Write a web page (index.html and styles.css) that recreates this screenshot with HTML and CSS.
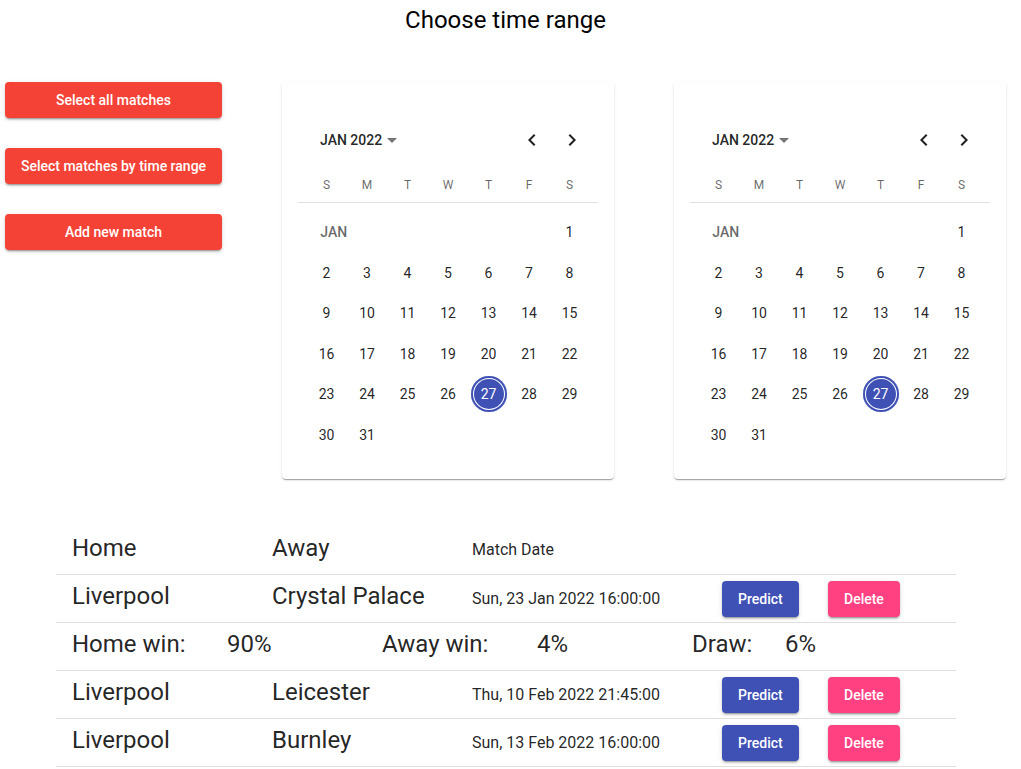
FILE: index.html
```html
<!DOCTYPE html>
<html>
<head>
<meta charset="utf-8">
<link rel="stylesheet" href="styles.css">
</head>
<body>
<div class="page">
  <h1 class="title">Choose time range</h1>
  <div class="top">
    <div class="actions">
      <button class="btn btn-red">Select all matches</button>
      <button class="btn btn-red">Select matches by time range</button>
      <button class="btn btn-red">Add new match</button>
    </div>

    <div class="card">
      <div class="cal-head">
        <div class="month">JAN 2022 <span class="caret"></span></div>
        <div class="navs">
          <svg class="nav" viewBox="0 0 24 24" width="24" height="24"><path d="M15.41 7.41 14 6l-6 6 6 6 1.41-1.41L10.83 12z"/></svg>
          <svg class="nav" viewBox="0 0 24 24" width="24" height="24"><path d="M10 6 8.59 7.41 13.17 12l-4.58 4.59L10 18l6-6z"/></svg>
        </div>
      </div>
      <div class="weekdays"><span>S</span><span>M</span><span>T</span><span>W</span><span>T</span><span>F</span><span>S</span></div>
      <div class="divider"></div>
      <div class="days">
        <span class="mlabel">JAN</span><span>1</span>
        <span>2</span><span>3</span><span>4</span><span>5</span><span>6</span><span>7</span><span>8</span>
        <span>9</span><span>10</span><span>11</span><span>12</span><span>13</span><span>14</span><span>15</span>
        <span>16</span><span>17</span><span>18</span><span>19</span><span>20</span><span>21</span><span>22</span>
        <span>23</span><span>24</span><span>25</span><span>26</span><span><b class="sel">27</b></span><span>28</span><span>29</span>
        <span>30</span><span>31</span>
      </div>
    </div>

    <div class="card">
      <div class="cal-head">
        <div class="month">JAN 2022 <span class="caret"></span></div>
        <div class="navs">
          <svg class="nav" viewBox="0 0 24 24" width="24" height="24"><path d="M15.41 7.41 14 6l-6 6 6 6 1.41-1.41L10.83 12z"/></svg>
          <svg class="nav" viewBox="0 0 24 24" width="24" height="24"><path d="M10 6 8.59 7.41 13.17 12l-4.58 4.59L10 18l6-6z"/></svg>
        </div>
      </div>
      <div class="weekdays"><span>S</span><span>M</span><span>T</span><span>W</span><span>T</span><span>F</span><span>S</span></div>
      <div class="divider"></div>
      <div class="days">
        <span class="mlabel">JAN</span><span>1</span>
        <span>2</span><span>3</span><span>4</span><span>5</span><span>6</span><span>7</span><span>8</span>
        <span>9</span><span>10</span><span>11</span><span>12</span><span>13</span><span>14</span><span>15</span>
        <span>16</span><span>17</span><span>18</span><span>19</span><span>20</span><span>21</span><span>22</span>
        <span>23</span><span>24</span><span>25</span><span>26</span><span><b class="sel">27</b></span><span>28</span><span>29</span>
        <span>30</span><span>31</span>
      </div>
    </div>
  </div>

  <table class="matches">
    <thead>
      <tr>
        <th class="big">Home</th>
        <th class="big">Away</th>
        <th class="small">Match Date</th>
        <th class="act"></th>
        <th class="act"></th>
      </tr>
    </thead>
    <tbody>
      <tr>
        <td class="big">Liverpool</td>
        <td class="big">Crystal Palace</td>
        <td class="small">Sun, 23 Jan 2022 16:00:00</td>
        <td class="act"><button class="btn btn-blue">Predict</button></td>
        <td class="act"><button class="btn btn-pink">Delete</button></td>
      </tr>
      <tr>
        <td colspan="5" class="big pred">
          <span class="lab lab-w">Home win:</span><span class="val">90%</span><span class="lab lab-w">Away win:</span><span class="val">4%</span><span class="lab lab-d">Draw:</span><span class="val">6%</span>
        </td>
      </tr>
      <tr>
        <td class="big">Liverpool</td>
        <td class="big">Leicester</td>
        <td class="small">Thu, 10 Feb 2022 21:45:00</td>
        <td class="act"><button class="btn btn-blue">Predict</button></td>
        <td class="act"><button class="btn btn-pink">Delete</button></td>
      </tr>
      <tr>
        <td class="big">Liverpool</td>
        <td class="big">Burnley</td>
        <td class="small">Sun, 13 Feb 2022 16:00:00</td>
        <td class="act"><button class="btn btn-blue">Predict</button></td>
        <td class="act"><button class="btn btn-pink">Delete</button></td>
      </tr>
    </tbody>
  </table>
</div>
</body>
</html>
```

FILE: styles.css
```css
* { box-sizing: border-box; }
html, body { margin: 0; padding: 0; background: #fff; }
body {
  font-family: Roboto, "Noto Sans", "Liberation Sans", sans-serif;
  color: rgba(0,0,0,0.87);
}
.page { width: 1011px; }
.title {
  margin: 4px 0 0;
  font-size: 24px;
  font-weight: 400;
  line-height: 32px;
  text-align: center;
  color: #000;
}
.top {
  display: flex;
  align-items: flex-start;
  gap: 60px;
  margin: 46px 0 0 5px;
}
.actions {
  display: flex;
  flex-direction: column;
  gap: 30px;
  width: 217px;
}
.btn {
  font-family: Roboto, "Noto Sans", "Liberation Sans", sans-serif;
  font-size: 14px;
  font-weight: 500;
  line-height: 24px;
  height: 36px;
  padding: 6px 16px;
  border: 0;
  border-radius: 4px;
  color: #fff;
  white-space: nowrap;
  box-shadow: 0 3px 1px -2px rgba(0,0,0,0.2), 0 2px 2px 0 rgba(0,0,0,0.14), 0 1px 5px 0 rgba(0,0,0,0.12);
  cursor: pointer;
}
.btn-red { background: #f44336; width: 100%; padding: 6px 8px; }
.btn-blue { background: #3f51b5; }
.btn-pink { background: #ff4081; }

.card {
  width: 332px;
  height: 397px;
  background: #fff;
  border-radius: 4px;
  box-shadow: 0 2px 1px -1px rgba(0,0,0,0.2), 0 1px 1px 0 rgba(0,0,0,0.14), 0 1px 3px 0 rgba(0,0,0,0.12);
  padding: 43px 16px 0;
}
.cal-head {
  height: 30px;
  display: flex;
  align-items: center;
  justify-content: space-between;
  padding: 0 14px 0 22px;
}
.month {
  font-size: 14px;
  font-weight: 500;
  color: rgba(0,0,0,0.87);
  display: flex;
  align-items: center;
}
.caret {
  display: inline-block;
  width: 0; height: 0;
  margin-left: 5px;
  border-left: 5px solid transparent;
  border-right: 5px solid transparent;
  border-top: 5px solid #757575;
}
.navs { display: flex; gap: 16px; }
.nav { fill: rgba(0,0,0,0.87); display: block; }
.weekdays {
  margin-top: 20px;
  height: 20px;
  display: grid;
  grid-template-columns: repeat(7, 40.5px);
  justify-content: center;
  align-items: center;
  font-size: 12px;
  color: rgba(0,0,0,0.6);
}
.weekdays span { text-align: center; }
.divider { margin-top: 7px; height: 1px; background: #e0e0e0; }
.days {
  margin-top: 9px;
  display: grid;
  grid-template-columns: repeat(7, 40.5px);
  grid-auto-rows: 40.5px;
  justify-content: center;
  font-size: 14px;
  color: rgba(0,0,0,0.87);
}
.days span {
  display: flex;
  align-items: center;
  justify-content: center;
}
.days .mlabel {
  grid-column: span 6;
  justify-content: flex-start;
  padding-left: 14px;
  font-weight: 500;
  color: rgba(0,0,0,0.6);
}
.sel {
  width: 36px;
  height: 36px;
  border-radius: 50%;
  background: #3f51b5;
  color: #fff;
  font-weight: 400;
  display: flex;
  align-items: center;
  justify-content: center;
  box-shadow: inset 0 0 0 2px #3f51b5, inset 0 0 0 3px #fff;
}

.matches {
  margin: 47px 0 0 56px;
  width: 900px;
  border-collapse: collapse;
  table-layout: fixed;
}
.matches th, .matches td {
  height: 48px;
  padding: 0 16px;
  text-align: left;
  font-weight: 400;
  border-bottom: 1px solid #e0e0e0;
  vertical-align: middle;
  color: rgba(0,0,0,0.87);
  white-space: nowrap;
}
.matches th:nth-child(1) { width: 200px; }
.matches th:nth-child(2) { width: 200px; }
.matches th:nth-child(3) { width: 250px; }
.matches th:nth-child(4) { width: 106px; }
.matches .big { font-size: 24px; padding-bottom: 4px; }
.matches .small { font-size: 16px; }
.matches .act { padding-top: 2px; }
.pred span { display: inline-block; }
.lab-w { width: 155px; }
.lab-d { width: 93px; }
.val { width: 155px; }
```
